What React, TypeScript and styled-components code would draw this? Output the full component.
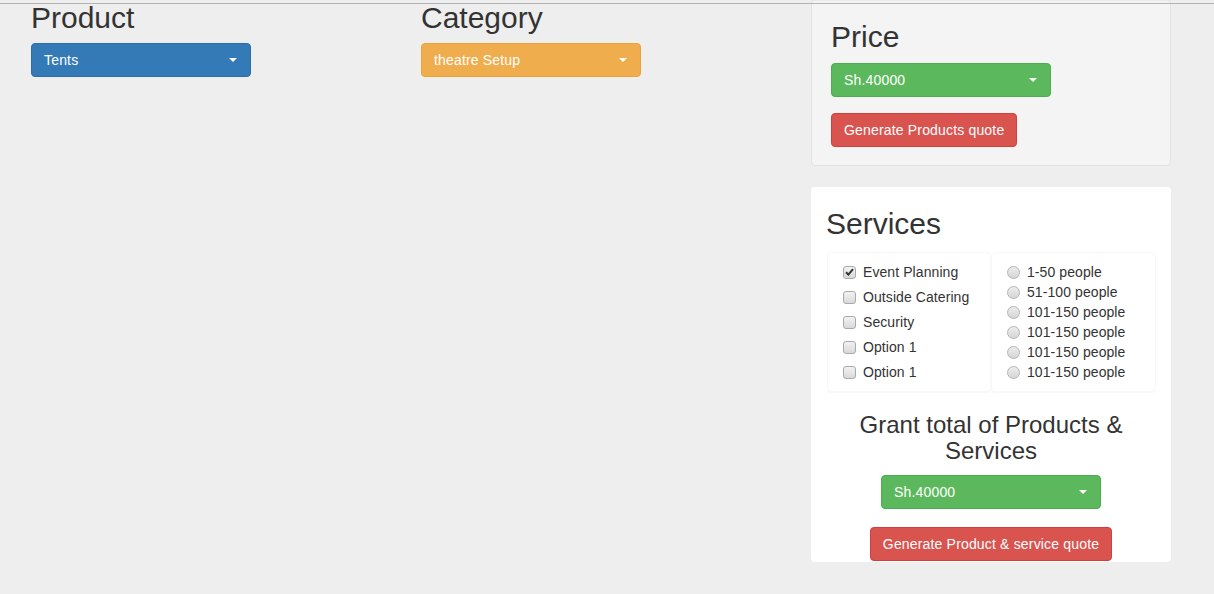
import React from "react";
import styled, { createGlobalStyle } from "styled-components";

const GlobalStyle = createGlobalStyle`
  html, body { margin: 0; padding: 0; }
  body {
    background: #eeeeee;
    font-family: "Liberation Sans", Arial, Helvetica, sans-serif;
    font-size: 14px;
    line-height: 20px;
    color: #333333;
    min-height: 594px;
    overflow: hidden;
  }
  * { box-sizing: border-box; }
`;

const TopRule = styled.div`
  position: fixed;
  top: 3px;
  left: 0;
  right: 0;
  height: 1px;
  background: #b3b3b3;
  z-index: 10;
`;

const Row = styled.div`
  display: grid;
  grid-template-columns: repeat(3, 360px);
  column-gap: 30px;
  padding-left: 31px;
  align-items: start;
`;

const Column = styled.div`
  display: flex;
  flex-direction: column;
  align-items: flex-start;
`;

const ColTitle = styled.h2`
  font-size: 30px;
  line-height: 33px;
  font-weight: 400;
  margin: 1px 0 9px;
  color: #333;
`;

const variants = {
  primary: { bg: "#337ab7", border: "#2e6da4" },
  warning: { bg: "#f0ad4e", border: "#eea236" },
  success: { bg: "#5cb85c", border: "#4cae4c" },
  danger: { bg: "#d9534f", border: "#d43f3a" },
};
type Variant = keyof typeof variants;

const Btn = styled.button<{ $v: Variant; $mt?: number }>`
  display: inline-flex;
  align-items: center;
  height: 34px;
  padding: 6px 12px;
  margin-top: ${(p) => p.$mt ?? 0}px;
  font-family: inherit;
  font-size: 14px;
  line-height: 20px;
  letter-spacing: 0.17px;
  color: #fff;
  background: ${(p) => variants[p.$v].bg};
  border: 1px solid ${(p) => variants[p.$v].border};
  border-radius: 4px;
  cursor: pointer;
  white-space: nowrap;
`;

const DropBtn = styled(Btn)`
  width: 220px;
  justify-content: space-between;
  padding-right: 12px;
`;

const Caret = styled.span`
  display: inline-block;
  width: 0;
  height: 0;
  margin-right: 1px;
  border-top: 4px solid #fff;
  border-left: 4px solid transparent;
  border-right: 4px solid transparent;
`;

const Well = styled.div`
  width: 360px;
  margin-top: -1px;
  margin-bottom: 21px;
  padding: 20px 19px 18px;
  background: #f4f4f4;
  border: 1px solid #e3e3e3;
  border-radius: 4px;
  box-shadow: inset 0 1px 1px rgba(0, 0, 0, 0.05);
  display: flex;
  flex-direction: column;
  align-items: flex-start;
`;

const WellTitle = styled.h2`
  font-size: 30px;
  line-height: 33px;
  font-weight: 400;
  margin: 0 0 10px;
`;

const Panel = styled.div`
  width: 360px;
  background: #fff;
  border-radius: 4px;
  padding: 20px 15px 1px;
  display: flex;
  flex-direction: column;
`;

const PanelTitle = styled.h2`
  font-size: 30px;
  line-height: 33px;
  font-weight: 400;
  margin: 0 0 12px;
`;

const OptionGrid = styled.div`
  display: grid;
  grid-template-columns: 164px 165px;
  margin-left: 1px;
`;

const OptionBox = styled.div`
  height: 140px;
  padding: 9px 0 10px 16px;
  border: 1px solid #f8f8f8;
  border-radius: 4px;
  box-shadow: 0 1px 1px rgba(0, 0, 0, 0.03);
  display: flex;
  flex-direction: column;
`;

const OptionRow = styled.label<{ $spaced?: boolean }>`
  display: flex;
  align-items: center;
  gap: 7px;
  height: 20px;
  margin-top: ${(p) => (p.$spaced ? 5 : 0)}px;
  margin-left: -1px;
  letter-spacing: 0.08px;
  white-space: nowrap;
  cursor: pointer;
  &:first-child { margin-top: 0; }
`;

const CheckBox = styled.span`
  width: 13px;
  height: 13px;
  flex: none;
  border: 1px solid #a9a9a9;
  border-radius: 3px;
  background: linear-gradient(#f2f2f2, #d9d9d9);
  display: flex;
  align-items: center;
  justify-content: center;
`;

const RadioDot = styled.span`
  width: 13px;
  height: 13px;
  flex: none;
  border: 1px solid #b4b4b4;
  border-radius: 50%;
  background: linear-gradient(#ececec, #d6d6d6);
`;

const TotalTitle = styled.h3`
  font-size: 24px;
  line-height: 26.4px;
  font-weight: 400;
  text-align: center;
  margin: 20px 0 10px;
`;

const Center = styled.div<{ $mt?: number }>`
  display: flex;
  justify-content: center;
  margin-top: ${(p) => p.$mt ?? 0}px;
`;

const Check = () => (
  <svg width="9" height="8" viewBox="0 0 9 8">
    <path d="M1 4.2 L3.4 6.6 L8 1.2" fill="none" stroke="#333" strokeWidth="2" />
  </svg>
);

const services = [
  { label: "Event Planning", checked: true },
  { label: "Outside Catering", checked: false },
  { label: "Security", checked: false },
  { label: "Option 1", checked: false },
  { label: "Option 1", checked: false },
];

const sizes = [
  "1-50 people",
  "51-100 people",
  "101-150 people",
  "101-150 people",
  "101-150 people",
  "101-150 people",
];

export default function App() {
  return (
    <>
      <GlobalStyle />
      <TopRule />
      <Row>
        <Column>
          <ColTitle>Product</ColTitle>
          <DropBtn $v="primary">
            Tents <Caret />
          </DropBtn>
        </Column>
        <Column>
          <ColTitle>Category</ColTitle>
          <DropBtn $v="warning">
            theatre Setup <Caret />
          </DropBtn>
        </Column>
        <Column>
          <Well>
            <WellTitle>Price</WellTitle>
            <DropBtn $v="success">
              Sh.40000 <Caret />
            </DropBtn>
            <Btn $v="danger" $mt={16}>
              Generate Products quote
            </Btn>
          </Well>
          <Panel>
            <PanelTitle>Services</PanelTitle>
            <OptionGrid>
              <OptionBox>
                {services.map((s, i) => (
                  <OptionRow key={i} $spaced>
                    <CheckBox>{s.checked && <Check />}</CheckBox>
                    {s.label}
                  </OptionRow>
                ))}
              </OptionBox>
              <OptionBox>
                {sizes.map((s, i) => (
                  <OptionRow key={i}>
                    <RadioDot />
                    {s}
                  </OptionRow>
                ))}
              </OptionBox>
            </OptionGrid>
            <TotalTitle>
              Grant total of Products &amp;
              <br />
              Services
            </TotalTitle>
            <Center>
              <DropBtn $v="success">
                Sh.40000 <Caret />
              </DropBtn>
            </Center>
            <Center $mt={18}>
              <Btn $v="danger">Generate Product &amp; service quote</Btn>
            </Center>
          </Panel>
        </Column>
      </Row>
    </>
  );
}
